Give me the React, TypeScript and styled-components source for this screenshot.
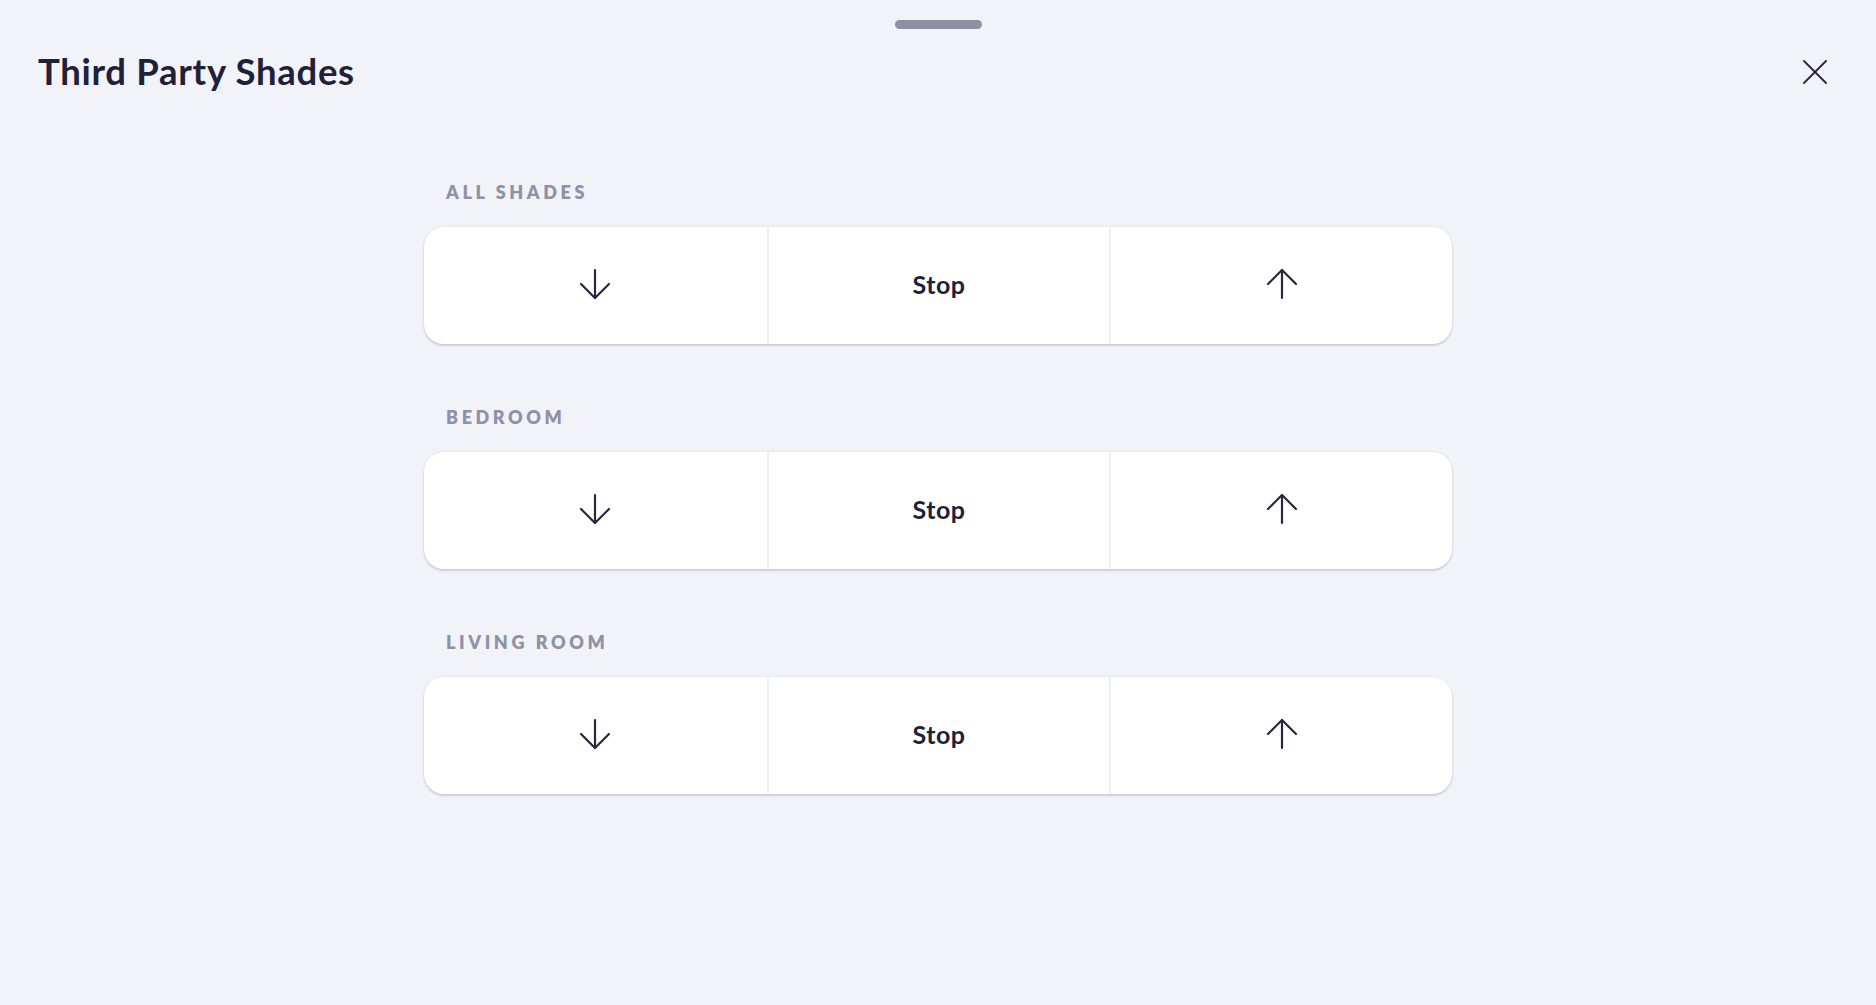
import React from "react";
import styled, { createGlobalStyle } from "styled-components";

const GlobalStyle = createGlobalStyle`
  html, body { margin: 0; padding: 0; background: #f2f3f8; }
  body { font-family: "Lato", "Noto Sans", sans-serif; }
  * { box-sizing: border-box; }
`;

const Page = styled.div`
  min-height: 100vh;
  background: #f2f3f8;
  display: flex;
  flex-direction: column;
`;

const HandleRow = styled.div`
  display: flex;
  justify-content: center;
  padding-top: 20px;
`;

const Handle = styled.div`
  width: 87px;
  height: 9px;
  border-radius: 5px;
  background: #8e90a6;
`;

const Header = styled.header`
  display: flex;
  align-items: center;
  justify-content: space-between;
  margin-top: 20px;
  padding: 0 49px 0 38px;
  height: 44px;
`;

const Title = styled.h1`
  margin: 0;
  font-family: "Lato", sans-serif;
  font-weight: 700;
  font-size: 36.5px;
  line-height: 44px;
  letter-spacing: 0.7px;
  color: #1f2039;
`;

const CloseButton = styled.button`
  border: none;
  background: transparent;
  padding: 0;
  width: 24px;
  height: 24px;
  display: flex;
  align-items: center;
  justify-content: center;
  cursor: pointer;
  margin-top: 2px;
`;

const Content = styled.main`
  width: 1028px;
  margin: 88px auto 0;
  display: flex;
  flex-direction: column;
  gap: 62px;
`;

const Section = styled.section`
  display: flex;
  flex-direction: column;
  gap: 23px;
`;

const Label = styled.h2`
  margin: 0;
  padding-left: 22px;
  font-family: "Lato", sans-serif;
  font-weight: 800;
  font-size: 18px;
  line-height: 23px;
  letter-spacing: 3.6px;
  text-transform: uppercase;
  color: #8f91a7;
`;

const Card = styled.div`
  display: grid;
  grid-template-columns: 1fr 1fr 1fr;
  height: 117px;
  background: #ffffff;
  border-radius: 20px;
  box-shadow: 0 2px 2px rgba(40, 42, 80, 0.16), 0 0 3px rgba(40, 42, 80, 0.1);
  overflow: hidden;
`;

const Cell = styled.button<{ $divider?: boolean }>`
  border: none;
  border-left: ${(p) => (p.$divider ? "2px solid #eeeff4" : "none")};
  background: transparent;
  padding: 0 0 3px;
  display: flex;
  align-items: center;
  justify-content: center;
  font-family: "Lato", sans-serif;
  font-weight: 700;
  font-size: 25px;
  letter-spacing: 0.5px;
  color: #1f2039;
  cursor: pointer;
`;

const ArrowIcon = ({ up }: { up?: boolean }) => (
  <svg width="48" height="48" viewBox="0 0 24 24" fill="none" stroke="#262840" strokeWidth="1.1" strokeLinecap="round" strokeLinejoin="round">
    {up ? (
      <>
        <path d="M12 19V5" />
        <path d="m5 12 7-7 7 7" />
      </>
    ) : (
      <>
        <path d="M12 5v14" />
        <path d="m19 12-7 7-7-7" />
      </>
    )}
  </svg>
);

const CloseIcon = () => (
  <svg width="24" height="24" viewBox="0 0 24 24" fill="none" stroke="#262840" strokeWidth="1.8" strokeLinecap="round">
    <path d="M1 1 23 23" />
    <path d="M23 1 1 23" />
  </svg>
);

const groups = ["All Shades", "Bedroom", "Living Room"];

export default function App() {
  return (
    <Page>
      <GlobalStyle />
      <HandleRow>
        <Handle />
      </HandleRow>
      <Header>
        <Title>Third Party Shades</Title>
        <CloseButton aria-label="Close">
          <CloseIcon />
        </CloseButton>
      </Header>
      <Content>
        {groups.map((g) => (
          <Section key={g}>
            <Label>{g}</Label>
            <Card>
              <Cell aria-label="Down">
                <ArrowIcon />
              </Cell>
              <Cell $divider>Stop</Cell>
              <Cell $divider aria-label="Up">
                <ArrowIcon up />
              </Cell>
            </Card>
          </Section>
        ))}
      </Content>
    </Page>
  );
}
